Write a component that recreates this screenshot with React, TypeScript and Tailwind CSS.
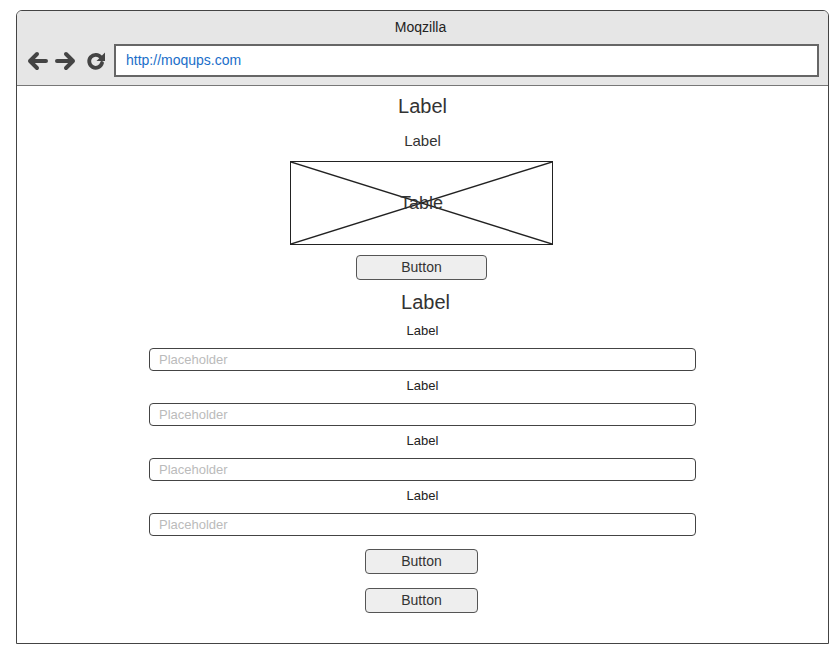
import React from "react";

const BackIcon = () => (
  <svg width="22" height="20" viewBox="0 0 22 20">
    <path d="M20 10H4M11 3L4 10l7 7" fill="none" stroke="#444" strokeWidth="4" strokeLinecap="round" strokeLinejoin="round" />
  </svg>
);

const ForwardIcon = () => (
  <svg width="22" height="20" viewBox="0 0 22 20">
    <path d="M2 10h16M11 3l7 7-7 7" fill="none" stroke="#444" strokeWidth="4" strokeLinecap="round" strokeLinejoin="round" />
  </svg>
);

const ReloadIcon = () => (
  <svg width="20" height="20" viewBox="0 0 20 20">
    <path d="M15 6.5A6.5 6.5 0 1 0 16 12" fill="none" stroke="#444" strokeWidth="3.8" strokeLinecap="round" />
    <path d="M10.5 10h8.5v-8.5z" fill="#444" />
  </svg>
);

const Field = ({ label, first }: { label: string; first?: boolean }) => (
  <>
    <div className={`text-[13px] leading-4 text-[#222] ${first ? "mt-[9px]" : "mt-[7px]"}`}>{label}</div>
    <input
      readOnly
      placeholder="Placeholder"
      className="mt-[9px] w-[547px] h-[23px] border border-[#444] rounded-[4px] px-[9px] text-[13px] placeholder:text-[#bbb] outline-none bg-white"
    />
  </>
);

const Button = ({ w, className }: { w: string; className: string }) => (
  <button className={`${w} h-[25px] mr-[2px] bg-[#eeeeee] border border-[#555] rounded-[4px] text-[14px] text-[#333] ${className}`}>
    Button
  </button>
);

export default function App() {
  return (
    <div className="w-[838px] h-[651px] bg-white pt-[10px] pl-[16px]" style={{ fontFamily: '"Liberation Sans", Arial, sans-serif' }}>
      <div className="w-[813px] h-[634px] border border-[#444] rounded-t-[6px] flex flex-col overflow-hidden">
        <div className="h-[75px] bg-[#e6e6e6] border-b border-[#777] flex flex-col">
          <div className="h-[33px] flex items-center justify-center pr-[4px] text-[14px] text-[#222]">Moqzilla</div>
          <div className="flex items-center pl-[9px] pr-[9px]">
            <div className="flex items-center gap-[7px]">
              <BackIcon />
              <ForwardIcon />
              <div className="ml-[2px]"><ReloadIcon /></div>
            </div>
            <div className="ml-[8px] flex-1 h-[33px] bg-white border-2 border-[#666] flex items-center pl-[10px] text-[14px] text-[#1a6ec9]">
              http://moqups.com
            </div>
          </div>
        </div>
        <div className="flex-1 flex flex-col items-center">
          <div className="mt-[8px] text-[20px] leading-6 text-[#333]">Label</div>
          <div className="mt-[14px] text-[15px] leading-[18px] text-[#333]">Label</div>
          <div className="mt-[11px] mr-[2px] relative w-[263px] h-[84px] border-[1.5px] border-[#222] flex items-center justify-center">
            <svg className="absolute inset-0" width="100%" height="100%" preserveAspectRatio="none" viewBox="0 0 100 100">
              <line x1="0" y1="0" x2="100" y2="100" stroke="#222" strokeWidth="1.4" vectorEffect="non-scaling-stroke" />
              <line x1="100" y1="0" x2="0" y2="100" stroke="#222" strokeWidth="1.4" vectorEffect="non-scaling-stroke" />
            </svg>
            <span className="relative text-[18px] text-[#333]">Table</span>
          </div>
          <Button w="w-[131px]" className="mt-[10px]" />
          <div className="mt-[10px] ml-[6px] text-[20px] leading-6 text-[#333]">Label</div>
          <Field label="Label" first />
          <Field label="Label" />
          <Field label="Label" />
          <Field label="Label" />
          <Button w="w-[113px]" className="mt-[13px]" />
          <Button w="w-[113px]" className="mt-[14px]" />
        </div>
      </div>
    </div>
  );
}
